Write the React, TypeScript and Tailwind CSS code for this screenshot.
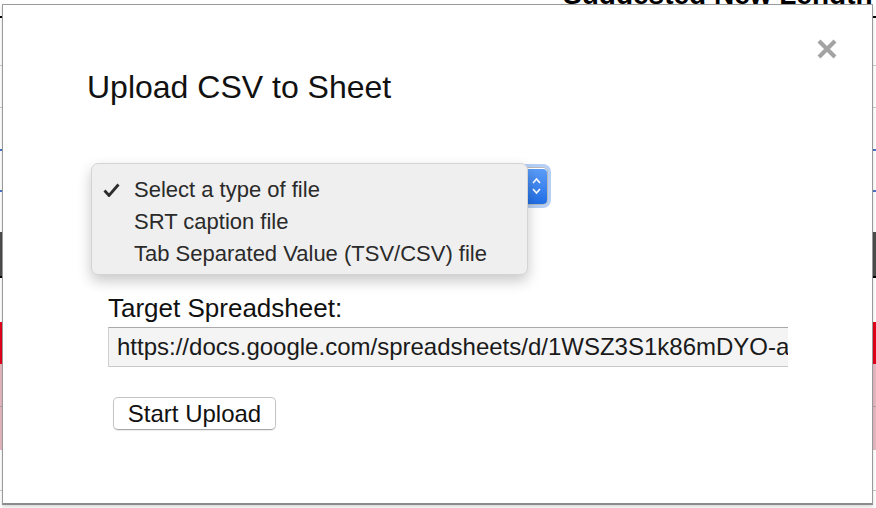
import React from 'react';

const sheetRows = [
    { h: 'h-[14px]', cls: 'border-b-2 border-black' },
    { h: 'h-[48px]', cls: 'border-b border-[#c8c8c8]' },
    { h: 'h-[42px]', cls: 'border-b border-[#c8c8c8]' },
    { h: 'h-[43px]', cls: 'border-b-2 border-[#4a74c9]' },
    { h: 'h-[41px]', cls: 'border-b-2 border-[#4a74c9]' },
    { h: 'h-[40px]', cls: '' },
    { h: 'h-[46px]', cls: 'bg-[#4d4d4d] border-b-2 border-black' },
    { h: 'h-[44px]', cls: '' },
    { h: 'h-[42px]', cls: 'bg-[#e3001b]' },
    { h: 'h-[43px]', cls: 'bg-[#e6b8c0] border-b border-[#b9a0a5]' },
    { h: 'h-[43px]', cls: 'bg-[#e6b8c0]' },
    { h: 'h-[41px]', cls: 'border-b border-[#c8c8c8]' },
    { h: 'h-[40px]', cls: '' },
];

const fileTypes = [
    { label: 'Select a type of file', checked: true },
    { label: 'SRT caption file', checked: false },
    { label: 'Tab Separated Value (TSV/CSV) file', checked: false },
];

export default function App() {
    return (
        <div className="relative h-[508px] w-[876px] overflow-hidden bg-white font-['Liberation_Sans',Arial,sans-serif]">
            {/* Spreadsheet behind the dialog */}
            <div className="flex flex-col">
                <div className="-mt-[25px] h-[29px] pl-[563px] text-[28px] font-bold leading-[40px] whitespace-nowrap text-black">
                    Suggested New Length
                </div>
                {sheetRows.map((row, i) => (
                    <div key={i} className={`${row.h} ${row.cls}`} />
                ))}
            </div>

            {/* Dialog */}
            <div className="absolute top-[4px] left-[2px] h-[501px] w-[871px] border border-b-2 border-[#9a9a9a] border-b-[#8c8c8c] bg-white pt-[63px] pl-[84px] shadow-[0_2px_3px_rgba(0,0,0,0.15)]">
                <button className="absolute top-[33px] right-[34px] p-0 text-[#a3a3a3]">
                    <svg width="22" height="22" viewBox="0 0 22 22">
                        <path
                            d="M3 3 L19 19 M19 3 L3 19"
                            stroke="currentColor"
                            strokeWidth="4.2"
                            strokeLinecap="butt"
                        />
                    </svg>
                </button>

                <h2 className="text-[32px] leading-[38px] font-normal text-[#111]">
                    Upload CSV to Sheet
                </h2>

                <div className="pl-[21px]">
                    {/* Select, with its popup open */}
                    <div className="relative mt-[61px] h-[38px] w-[440px]">
                        <div className="flex h-full w-full items-center justify-end rounded-[5px] border border-[#b9b9b9] bg-white ring-[3px] ring-[#b5cff5]">
                            <div className="flex h-[35px] w-[21px] items-center justify-center rounded-r-[4px] bg-gradient-to-b from-[#5a9cf8] to-[#1f6ee6]">
                                <svg width="11" height="22" viewBox="0 0 11 22">
                                    <path
                                        d="M2 8 L5.5 4 L9 8 M2 14 L5.5 18 L9 14"
                                        fill="none"
                                        stroke="white"
                                        strokeWidth="1.6"
                                    />
                                </svg>
                            </div>
                        </div>

                        <div className="absolute -top-[4px] -left-[17px] h-[112px] w-[437px] rounded-[7px] border border-[#d4d4d4] bg-[#efefef] pt-[10px] shadow-[0_6px_14px_rgba(0,0,0,0.22)]">
                            {fileTypes.map((t) => (
                                <div
                                    key={t.label}
                                    className="flex h-[32px] items-center text-[22px] leading-[32px] whitespace-nowrap text-[#2a2a2a]"
                                >
                                    <span className="flex w-[42px] justify-start pl-[11px]">
                                        {t.checked && (
                                            <svg
                                                width="17"
                                                height="14"
                                                viewBox="0 0 17 14"
                                            >
                                                <path
                                                    d="M1.5 7.5 L6 12.5 L15.5 1.5"
                                                    fill="none"
                                                    stroke="#2d2d2d"
                                                    strokeWidth="2.8"
                                                />
                                            </svg>
                                        )}
                                    </span>
                                    {t.label}
                                </div>
                            ))}
                        </div>
                    </div>

                    <p className="mt-[88px] text-[26px] leading-[30px] text-[#111]">
                        Target Spreadsheet:
                    </p>

                    <div className="mt-[4px] h-[40px] w-[680px] overflow-hidden border-t border-l border-t-[#a9a9a9] border-l-[#d0d0d0] border-b border-b-[#c9c9c9] bg-[#f4f4f4] pl-[8px] text-[24px] leading-[37px] whitespace-nowrap text-[#1a1a1a]">
                        https://docs.google.com/spreadsheets/d/1WSZ3S1k86mDYO-a
                    </div>

                    <button className="mt-[30px] ml-[5px] h-[33px] w-[163px] rounded-[5px] border border-[#c4c4c4] border-b-[#a8a8a8] bg-white text-[24px] leading-[31px] text-[#111] shadow-[0_1px_1px_rgba(0,0,0,0.08)]">
                        Start Upload
                    </button>
                </div>
            </div>
        </div>
    );
}
